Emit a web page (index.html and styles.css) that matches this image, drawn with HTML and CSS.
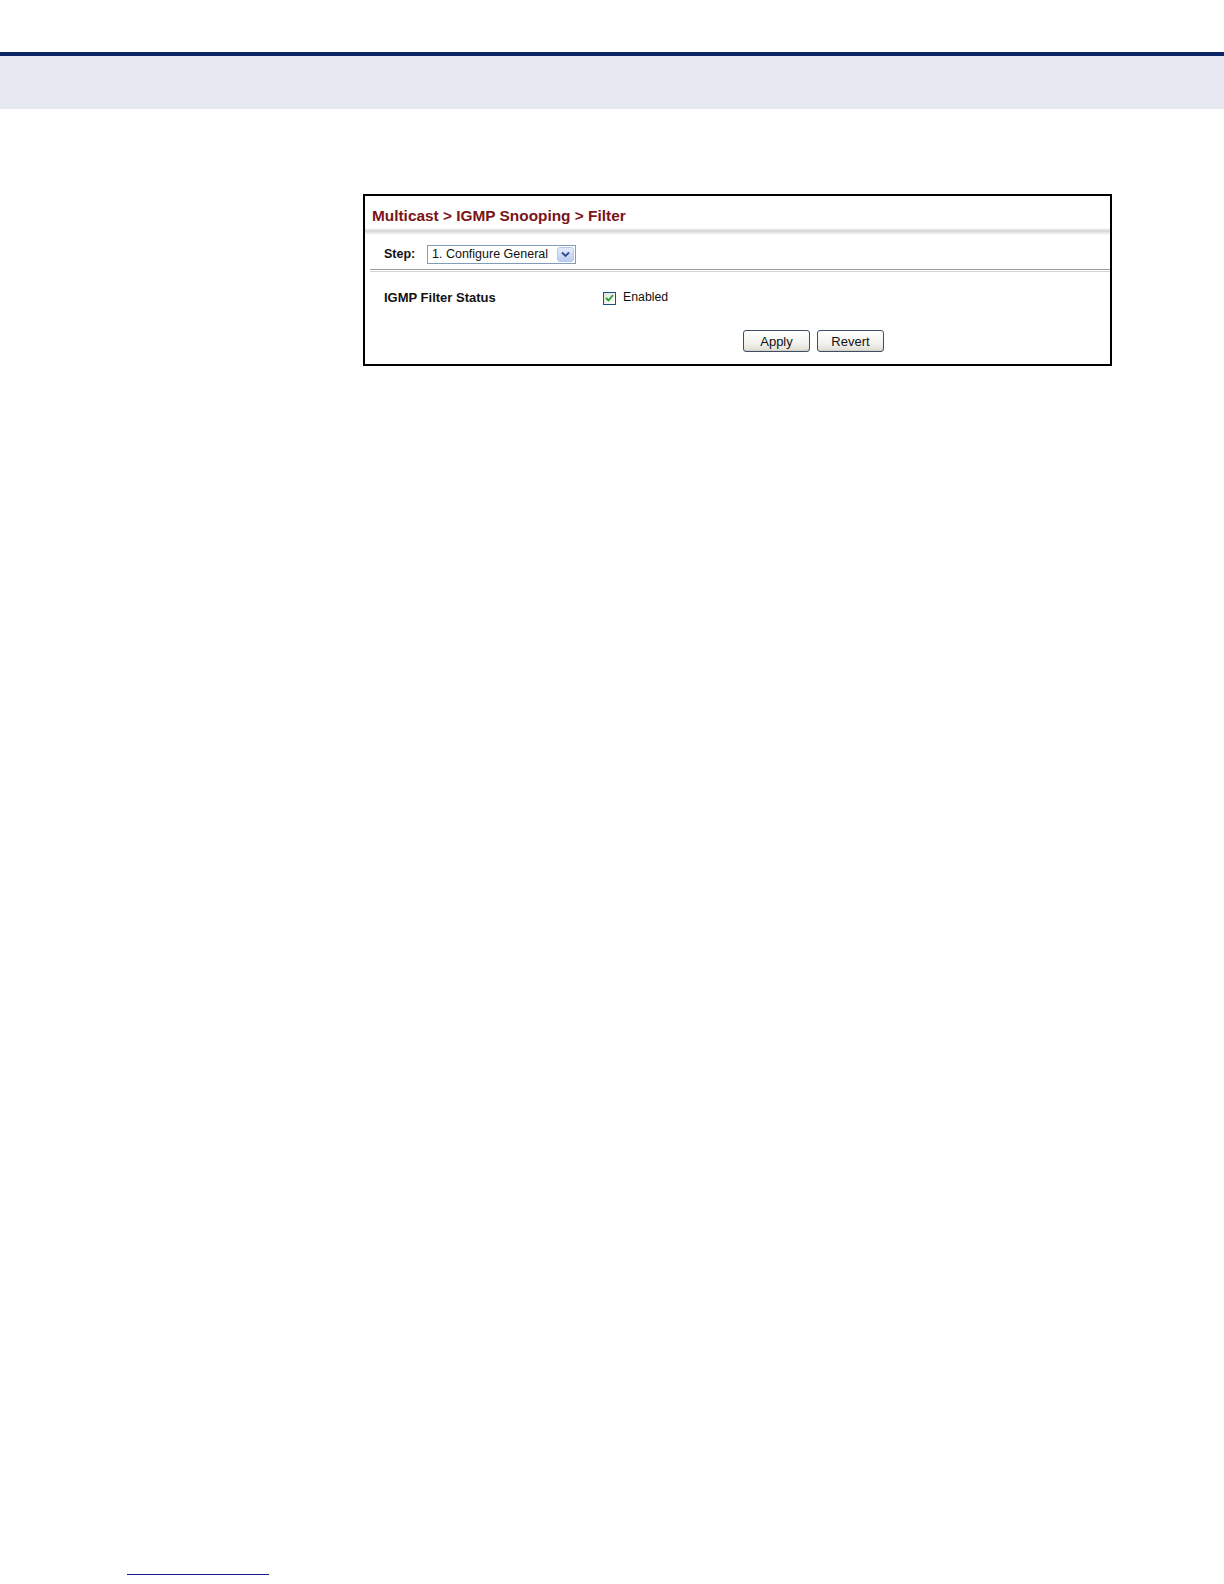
FILE: index.html
```html
<!DOCTYPE html>
<html>
<head>
<meta charset="utf-8">
<link rel="stylesheet" href="styles.css">
</head>
<body>
<div class="page-head"></div>
<div class="content">
  <div class="panel">
    <div class="title">Multicast &gt; IGMP Snooping &gt; Filter</div>
    <div class="title-shadow"></div>
    <div class="step-row">
      <span class="step-label">Step:</span>
      <div class="select">
        <span class="select-text">1. Configure General</span>
        <span class="select-btn">
          <svg width="11" height="9" viewBox="0 0 11 9"><path d="M2 2.5 L5.5 6 L9 2.5" fill="none" stroke="#2c4a8c" stroke-width="1.8"/></svg>
        </span>
      </div>
    </div>
    <div class="rule"></div>
    <div class="field-row">
      <span class="field-label">IGMP Filter Status</span>
      <span class="checkbox">
        <svg width="9" height="8" viewBox="0 0 9 8"><path d="M1 4 L3.5 6.5 L8 1" fill="none" stroke="#21a121" stroke-width="1.8"/></svg>
      </span>
      <span class="check-text">Enabled</span>
    </div>
    <div class="button-row">
      <button class="btn btn-apply">Apply</button>
      <button class="btn">Revert</button>
    </div>
  </div>
</div>
<div class="foot-line"></div>
</body>
</html>
```
FILE: styles.css
```css
html, body {
  margin: 0;
  padding: 0;
  background: #ffffff;
  font-family: "Liberation Sans", Arial, sans-serif;
}
body {
  width: 1224px;
  height: 1584px;
  position: relative;
  overflow: hidden;
}
.page-head {
  margin-top: 52px;
  height: 53px;
  border-top: 4px solid #0b2566;
  background: #e6e9f0;
}
.content {
  padding-left: 363px;
  padding-top: 85px;
}
.panel {
  width: 745px;
  height: 168px;
  border: 2px solid #000000;
  background: #ffffff;
}
.title {
  height: 32px;
  line-height: 40px;
  padding-left: 7px;
  font-size: 15.4px;
  font-weight: bold;
  color: #7a1416;
  white-space: nowrap;
}
.title-shadow {
  height: 7px;
  background: linear-gradient(#ffffff, #d4d4d4 40%, #f0f0f0 80%, #ffffff);
}
.step-row {
  display: flex;
  align-items: center;
  height: 22px;
  margin-top: 8px;
  padding-left: 19px;
}
.step-label {
  font-size: 12.5px;
  font-weight: bold;
  color: #111;
  width: 43px;
}
.select {
  display: flex;
  align-items: center;
  width: 149px;
  height: 19px;
  border: 1px solid #7f9db9;
  background: #fff;
  box-sizing: border-box;
  padding: 1px;
}
.select-text {
  flex: 1;
  font-size: 12.5px;
  color: #111;
  padding-left: 3px;
  line-height: 15px;
  white-space: nowrap;
}
.select-btn {
  width: 17px;
  height: 15px;
  background: linear-gradient(#e3ebfc, #bccdf2);
  border: 1px solid #b5c7ee;
  box-sizing: border-box;
  display: flex;
  align-items: center;
  justify-content: center;
  border-radius: 3px;
}
.rule {
  margin-top: 4px;
  margin-left: 5px;
  height: 1px;
  border-top: 1px solid #9a9a9a;
  border-bottom: 1px solid #d4d4d4;
}
.field-row {
  display: flex;
  align-items: center;
  height: 16px;
  margin-top: 17px;
  padding-left: 19px;
}
.field-label {
  width: 219px;
  font-size: 13px;
  font-weight: bold;
  color: #111;
  white-space: nowrap;
}
.checkbox {
  width: 13px;
  height: 13px;
  margin-top: 2px;
  box-sizing: border-box;
  border: 1px solid #1c5180;
  background: linear-gradient(135deg, #e2e2dd, #ffffff);
  display: flex;
  align-items: center;
  justify-content: center;
}
.check-text {
  margin-left: 7px;
  font-size: 12.3px;
  color: #111;
}
.button-row {
  display: flex;
  gap: 7px;
  margin-top: 25px;
  padding-left: 378px;
}
.btn {
  width: 67px;
  height: 22px;
  border: 1px solid #3c4f66;
  border-radius: 3px;
  background: linear-gradient(#ffffff, #f3f3ef 60%, #dedbd3);
  font-family: "Liberation Sans", Arial, sans-serif;
  font-size: 13px;
  color: #111;
  padding: 0;
  box-shadow: inset 0 -1px 0 #d6d0c2;
}
.foot-line {
  position: absolute;
  left: 127px;
  top: 1574px;
  width: 142px;
  height: 1px;
  background: #1a1a8a;
}
```
